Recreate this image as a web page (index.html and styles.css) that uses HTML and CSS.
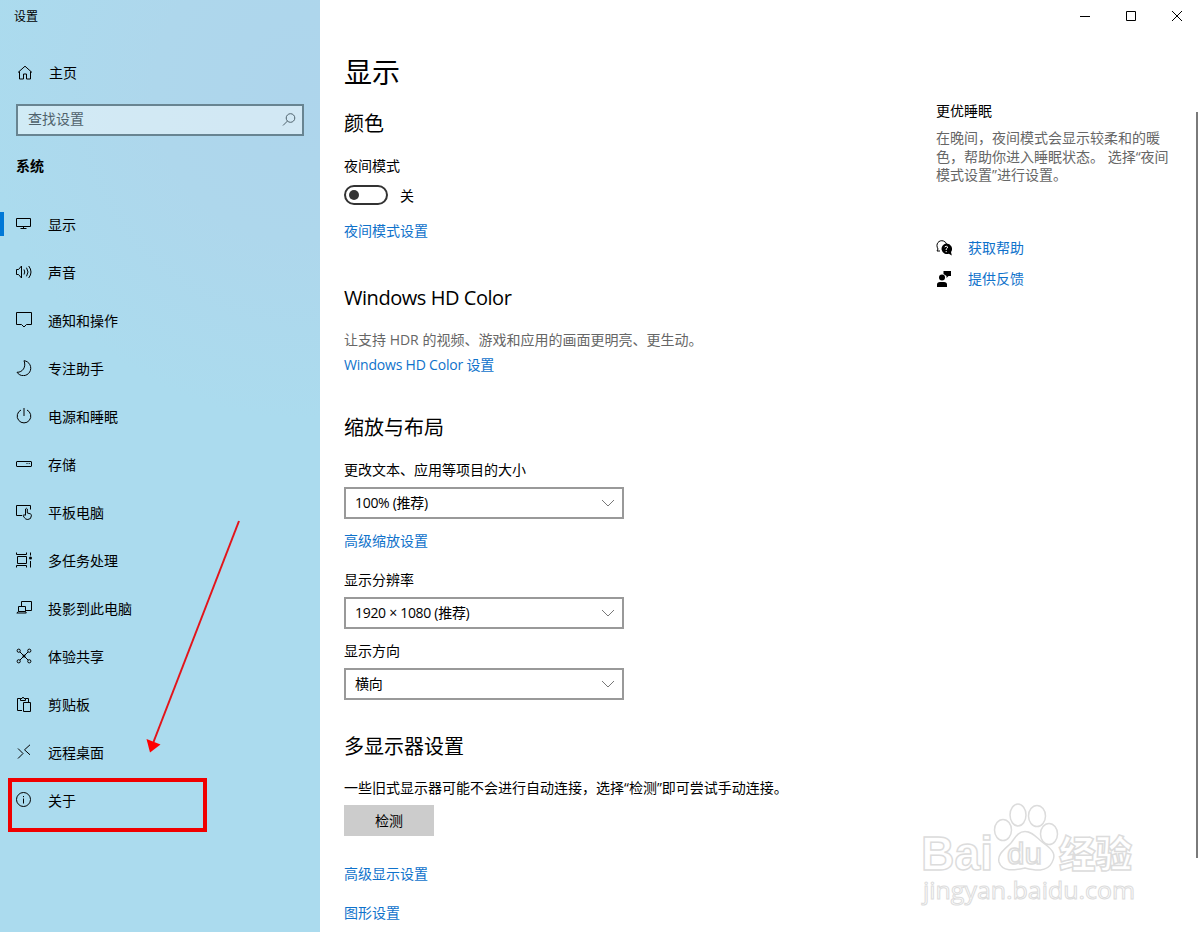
FILE: index.html
```html
<!DOCTYPE html>
<html lang="zh-CN">
<head>
    <meta charset="UTF-8">
    <meta name="viewport" content="width=device-width, initial-scale=1.0">
    <title>设置</title>
    <link rel="stylesheet" href="styles.css">
</head>
<body>

    <div class="window">
        <div class="sidebar">
            <div class="app-title">设置</div>
            <a class="nav-item home" href="#">
                <svg viewBox="0 0 16 16"><path d="M1 7.500 8 1.200l7 6.300M2.500 6.500V14h4V9h3v5h4V6.500"/></svg>
                <span>主页</span>
            </a>
            <div class="search">
                <input type="text" placeholder="查找设置">
                <svg viewBox="0 0 16 16"><circle cx="9.500" cy="6" r="4.300"/><path d="M6.500 9 2 13.500"/></svg>
            </div>
            <div class="group-title">系统</div>

            <div class="nav">
                <a class="nav-item active" href="#">
                    <svg viewBox="0 0 16 16"><path d="M.5 2.500h14v8H.5zM7.500 10.500v2M4.500 12.500h6"/></svg>
                    <span>显示</span>
                </a>
                <a class="nav-item" href="#">
                    <svg viewBox="0 0 16 16"><path d="M.5 5.500h2l3-3.500v12l-3-3.500h-2zM8 5.500q1.500 2.500 0 5M10.500 3.700q3 4.300 0 8.600M12.700 2q4.600 6 0 12"/></svg>
                    <span>声音</span>
                </a>
                <a class="nav-item" href="#">
                    <svg viewBox="0 0 16 16"><path d="M.5.500h15v12H10.500L8 15 5.500 12.500H.5z"/></svg>
                    <span>通知和操作</span>
                </a>
                <a class="nav-item" href="#">
                    <svg viewBox="0 0 16 16"><path d="M8 .7a7.500 7.500 0 1 1-7 11.600C6.500 12.500 10.500 7 8 .7z"/></svg>
                    <span>专注助手</span>
                </a>
                <a class="nav-item" href="#">
                    <svg viewBox="0 0 16 16"><path d="M8 0v8M5 2a6.800 6.800 0 1 0 6 0"/></svg>
                    <span>电源和睡眠</span>
                </a>
                <a class="nav-item" href="#">
                    <svg viewBox="0 0 16 16"><rect x=".5" y="5.500" width="15" height="5" rx=".5"/><path d="M10.500 7.500h1M12.700 7.500h1"/></svg>
                    <span>存储</span>
                </a>
                <a class="nav-item" href="#">
                    <svg viewBox="0 0 16 16"><path d="M6 11.500H.5v-10h14v4M9.500 11V5q.9-1.500 1.800 0v4l3 .8q1.300.4 1.100 2-.2 3.700-3.600 3.700-2.300 0-3.300-1.700L7 11.500q.8-1.500 2.500 0"/></svg>
                    <span>平板电脑</span>
                </a>
                <a class="nav-item" href="#">
                    <svg viewBox="0 0 16 16"><path d="M.5.500v2h10v-2M.5 15.500v-2h10v2M1.500 4.500h9v7h-9zM14.500.5v3M14.500 9v6.500"/><circle class="solid" cx="14.500" cy="6" r="1.500"/></svg>
                    <span>多任务处理</span>
                </a>
                <a class="nav-item" href="#">
                    <svg viewBox="0 0 16 16"><path d="M5.500 6V1.500h10v9h-6M2.500 6.500h7v5h-7zM2.500 11.500l-1.700 1.500h9.500l-.8-1.500"/></svg>
                    <span>投影到此电脑</span>
                </a>
                <a class="nav-item" href="#">
                    <svg viewBox="0 0 16 16"><path d="m4 4 8 8M12 4l-8 8"/><circle cx="2.700" cy="2.700" r="1.600"/><circle cx="13.300" cy="2.700" r="1.600"/><circle cx="2.700" cy="13.300" r="1.600"/><circle cx="13.300" cy="13.300" r="1.600"/><circle class="solid" cx="8" cy="8" r="1.500"/></svg>
                    <span>体验共享</span>
                </a>
                <a class="nav-item" href="#">
                    <svg viewBox="0 0 16 16"><path d="M6 14.500H1.500v-12h3M9.500 2.500h3v4M4.500 4.500v-2H6q1-3 2 0h1.500v2zM7.500 6.500h7v9h-7z"/></svg>
                    <span>剪贴板</span>
                </a>
                <a class="nav-item" href="#">
                    <svg viewBox="0 0 16 16"><path d="m2 4.500 5 5-5 5M14 .8l-5.500 5 5.500 5"/></svg>
                    <span>远程桌面</span>
                </a>
                <a class="nav-item" href="#">
                    <svg viewBox="0 0 16 16"><circle cx="7.500" cy="7.500" r="7"/><path d="M7.500 6.500v5M7.500 4v1.200"/></svg>
                    <span>关于</span>
                </a>
            </div>
        </div>

        <div class="content">
            <h1>显示</h1>

            <h2 class="color-title">颜色</h2>
            <div class="label">夜间模式</div>
            <div class="toggle-row">
                <span class="toggle"></span>
                <span class="state">关</span>
            </div>
            <a class="link" href="#">夜间模式设置</a>

            <h2 class="hd-title">Windows HD Color</h2>
            <p class="hint">让支持 HDR 的视频、游戏和应用的画面更明亮、更生动。</p>
            <a class="link hd-link" href="#">Windows HD Color 设置</a>

            <h2 class="scale-title">缩放与布局</h2>
            <div class="label">更改文本、应用等项目的大小</div>
            <div class="select">100% (推荐)
                <svg viewBox="0 0 14 8"><path d="m1 1 6 6 6-6"/></svg>
            </div>
            <a class="link scale-link" href="#">高级缩放设置</a>
            <div class="label next">显示分辨率</div>
            <div class="select">1920 × 1080 (推荐)
                <svg viewBox="0 0 14 8"><path d="m1 1 6 6 6-6"/></svg>
            </div>
            <div class="label direction">显示方向</div>
            <div class="select">横向
                <svg viewBox="0 0 14 8"><path d="m1 1 6 6 6-6"/></svg>
            </div>

            <h2 class="multi-title">多显示器设置</h2>
            <p class="detect-text">一些旧式显示器可能不会进行自动连接，选择“检测”即可尝试手动连接。</p>
            <button type="button">检测</button>
            <a class="link advanced" href="#">高级显示设置</a>
            <a class="link graphics" href="#">图形设置</a>
        </div>

        <div class="aside">
            <div class="controls">
                <svg viewBox="0 0 10 10"><path d="M0 5.500h10"/></svg>
                <svg viewBox="0 0 10 10"><path d="M.5.500h9v9h-9z"/></svg>
                <svg viewBox="0 0 10 10"><path d="m0 0 10 10M10 0 0 10"/></svg>
            </div>
            <h3>更优睡眠</h3>
            <p>在晚间，夜间模式会显示较柔和的暖<br>色，帮助你进入睡眠状态。 选择“夜间<br>模式设置”进行设置。</p>
            <a class="help" href="#">
                <svg viewBox="0 0 16 16"><path class="line" d="M4 11H1l1-2C-1 4 3-.5 7.500 1q2.500 1 3 3"/><path d="M10.300 3.500a5.300 5.300 0 1 0 2.500 10.200L15.800 15.500 15 12A5.400 5.400 0 0 0 10.300 3.500z"/><path class="mark" d="M8.700 7q1.500-1.500 2.800-.2.500 1.200-1.300 2.200v1M10.200 11v1.200"/></svg>
                获取帮助
            </a>
            <a class="help" href="#">
                <svg viewBox="0 0 16 16"><circle cx="6" cy="6.500" r="3"/><path d="M1 16v-2.500Q1 11 4 11h4q3 0 3 2.500V16zM7.500 0H15v5h-2.500L10.500 7V5L7.500 3z"/></svg>
                提供反馈
            </a>
        </div>

        <div class="scrollbar"></div>

        <svg class="arrow" viewBox="0 0 100 236">
            <path class="shaft" d="M94 3 8.500 224"/>
            <path class="head" d="m1.500 221 14 5.500L5 234.500z"/>
        </svg>
        <div class="highlight"></div>

        <svg class="watermark" viewBox="0 0 230 120">
            <text class="bai" x="11" y="75" textLength="72" lengthAdjust="spacingAndGlyphs">Bai</text>
            <ellipse cx="93" cy="35" rx="8.500" ry="10.500"/>
            <ellipse cx="108" cy="20" rx="8" ry="11"/>
            <ellipse cx="127" cy="21" rx="8.500" ry="10.500"/>
            <ellipse cx="139" cy="39" rx="8.500" ry="10.500"/>
            <path d="M115 36.500c8 0 12 7 19 12 10 7 12 12 8 19-5 10-17 8-27 5.500-11 2.500-23 4-26-6-2-8 6-13 12-19 4-5 7-11.500 14-11.500z"/>
            <text class="du" x="97" y="69" textLength="35" lengthAdjust="spacingAndGlyphs">du</text>
            <text class="jingyan" x="149" y="73" textLength="73" lengthAdjust="spacingAndGlyphs">经验</text>
            <text class="url" x="13" y="104" textLength="212" lengthAdjust="spacingAndGlyphs">jingyan.baidu.com</text>
        </svg>
    </div>

</body>
</html>
```
FILE: styles.css
```css
body {
    margin: 0;
    font-family: "Open Sans", "Noto Sans CJK SC", sans-serif;
    font-size: 14px;
    line-height: 20px;
    color: #000;
    background-color: #fff;
}

* {
    box-sizing: border-box;
}

a {
    text-decoration: none;
}

svg {
    fill: none;
    stroke: currentColor;
}

.window {
    position: relative;
    display: flex;
    width: 1200px;
    height: 932px;
    overflow: hidden;
}

.sidebar {
    width: 320px;
    background: radial-gradient(ellipse 320px 330px at 300px 90px, #aed5ec 0%, #aed7ec 45%, #abdbee 100%);
}

.app-title {
    padding: 7px 14px 5px;
    font-size: 12px;
}

.nav-item {
    display: flex;
    align-items: center;
    gap: 16px;
    height: 48px;
    padding-left: 16px;
    color: #000;
}

.nav-item svg {
    width: 16px;
    height: 16px;
}

.nav .nav-item span {
    margin-top: 2px;
}

.nav-item .solid {
    fill: #000;
    stroke: none;
}

.nav-item.home {
    height: 40px;
    margin-top: 21px;
    padding-left: 17px;
}

.nav-item.active {
    border-left: 4px solid #0078d7;
    border-image: linear-gradient(transparent 25%, #0078d7 25%, #0078d7 75%, transparent 75%) 0 0 0 4;
    padding-left: 12px;
}

.search {
    display: flex;
    align-items: center;
    width: 288px;
    height: 32px;
    margin: 11px 16px 0;
    padding: 0 5px 0 10px;
    border: 2px solid #688491;
    background-color: rgba(255, 255, 255, 0.45);
    color: #4f626c;
}

.search input {
    flex: 1;
    padding: 0 0 2px;
    border: none;
    outline: none;
    background: none;
    font: inherit;
}

.search input::placeholder {
    color: #4f626c;
}

.search svg {
    width: 16px;
    height: 16px;
}

.group-title {
    margin: 20px 16px 24px;
    font-weight: bold;
}

.content {
    width: 592px;
    padding: 54px 24px 0;
}

h1, h2, h3, p {
    margin: 0;
    font-weight: normal;
}

h1 {
    font-size: 28px;
    line-height: 36px;
}

h2 {
    margin-top: 43px;
    font-size: 20px;
    line-height: 28px;
}

h2.color-title {
    margin-top: 20px;
}

h2.hd-title {
    letter-spacing: -0.45px;
}

.label {
    margin-top: 18px;
}

.toggle-row {
    display: flex;
    align-items: center;
    gap: 12px;
    height: 20px;
    margin: 9px 0 16px;
}

.toggle {
    width: 44px;
    height: 20px;
    padding: 3px;
    border: 2px solid #333;
    border-radius: 10px;
}

.toggle::before {
    content: "";
    display: block;
    width: 10px;
    height: 10px;
    border-radius: 50%;
    background-color: #333;
}

.state {
    padding-top: 2px;
}

.link {
    display: block;
    color: #0f72cb;
}

.hint {
    margin-top: 18px;
    color: #666;
}

.hd-link {
    margin-top: 5px;
    letter-spacing: -0.2px;
}

h2.scale-title {
    margin-top: 39px;
}

.select {
    display: flex;
    align-items: center;
    justify-content: space-between;
    width: 280px;
    height: 32px;
    margin-top: 7px;
    padding: 0 7px 0 9px;
    border: 2px solid #999;
    letter-spacing: -0.3px;
}

.select svg {
    width: 14px;
    height: 8px;
    stroke: #777;
}

.scale-link {
    margin-top: 12px;
}

.label.next {
    margin-top: 19px;
}

.label.direction {
    margin-top: 12px;
}

h2.multi-title {
    margin-top: 33px;
}

.detect-text {
    margin-top: 17px;
}

button {
    display: block;
    width: 90px;
    height: 31px;
    margin-top: 7px;
    padding: 0;
    border: none;
    background-color: #ccc;
    font: inherit;
}

.advanced {
    margin-top: 28px;
}

.graphics {
    margin-top: 19px;
}

.aside {
    width: 270px;
    padding-left: 24px;
}

.controls {
    display: flex;
    justify-content: flex-end;
    gap: 36px;
    margin: 11px 0 80px;
}

.controls svg {
    width: 10px;
    height: 10px;
}

.aside h3 {
    font-size: 14px;
}

.aside p {
    margin: 8px 0 53px;
    line-height: 18.500px;
    color: #666;
    white-space: nowrap;
}

.help {
    display: flex;
    align-items: center;
    gap: 16px;
    margin-bottom: 11px;
    color: #0f72cb;
}

.help svg {
    width: 16px;
    height: 16px;
    fill: #000;
    stroke: none;
}

.help .line {
    fill: none;
    stroke: #000;
}

.help .mark {
    fill: none;
    stroke: #fff;
}

.scrollbar {
    position: absolute;
    left: 1196px;
    top: 112px;
    width: 2px;
    height: 746px;
    background-color: #7a7a7a;
}

/* red marks over the sidebar */
.arrow {
    position: absolute;
    left: 145px;
    top: 518px;
    width: 100px;
    height: 236px;
}

.arrow .shaft {
    stroke: #e3141a;
    stroke-width: 2;
}

.arrow .head {
    fill: #f00;
    stroke: none;
}

.highlight {
    position: absolute;
    left: 8px;
    top: 778px;
    width: 199px;
    height: 54px;
    border: 4px solid #f00000;
}

.watermark {
    position: absolute;
    left: 910px;
    top: 795px;
    width: 230px;
    height: 120px;
    fill: #fff;
    stroke: #dcdcdc;
    stroke-width: 1.500;
    font-family: "Liberation Sans", "Noto Sans CJK SC", sans-serif;
    font-weight: bold;
}

.watermark .bai {
    font-size: 49px;
}

.watermark .du {
    font-size: 29px;
    font-weight: normal;
}

.watermark .jingyan {
    font-size: 37px;
    font-weight: 900;
}

.watermark .url {
    font-family: "Open Sans", sans-serif;
    font-size: 24px;
    font-weight: normal;
    stroke-width: 1;
}
```
